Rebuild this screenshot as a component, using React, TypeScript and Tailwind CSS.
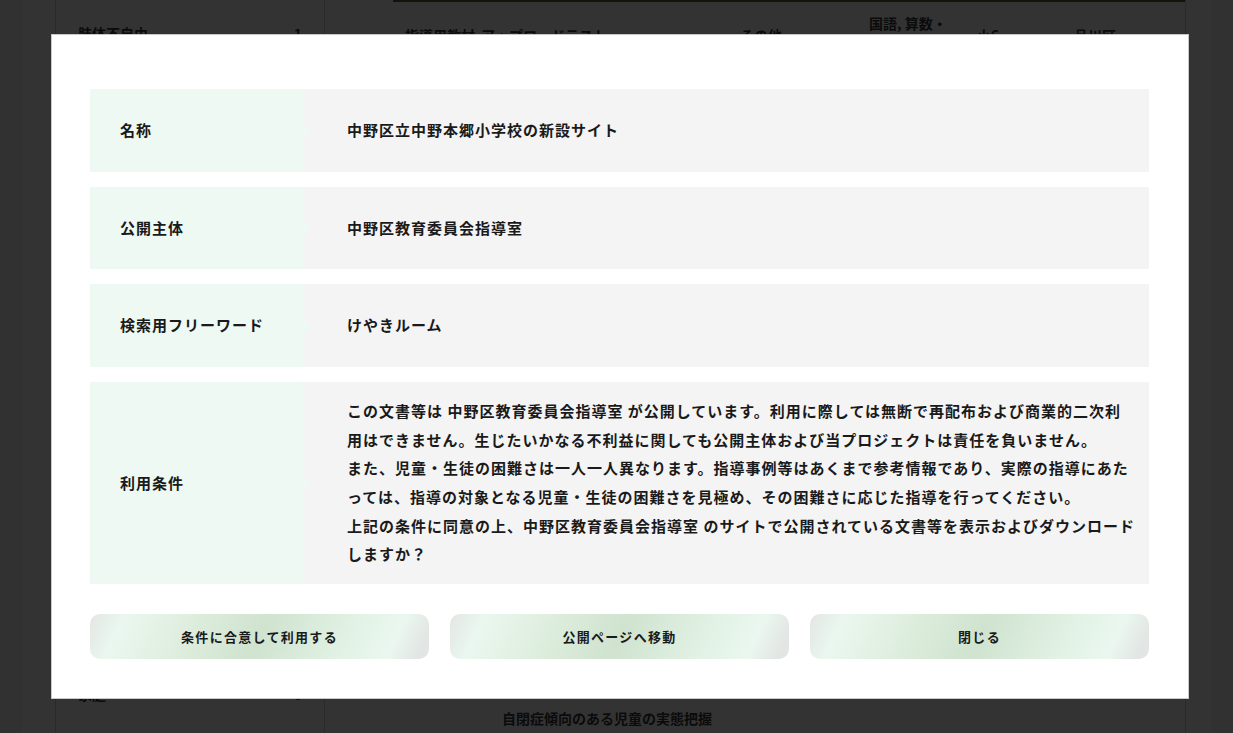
const jp = "font-['Noto_Sans_CJK_JP','Noto_Sans',sans-serif]";

const rows = [
  { label: '名称', value: ['中野区立中野本郷小学校の新設サイト'] },
  { label: '公開主体', value: ['中野区教育委員会指導室'] },
  { label: '検索用フリーワード', value: ['けやきルーム'] },
  {
    label: '利用条件',
    value: [
      'この文書等は 中野区教育委員会指導室 が公開しています。利用に際しては無断で再配布および商業的二次利',
      '用はできません。生じたいかなる不利益に関しても公開主体および当プロジェクトは責任を負いません。',
      'また、児童・生徒の困難さは一人一人異なります。指導事例等はあくまで参考情報であり、実際の指導にあた',
      'っては、指導の対象となる児童・生徒の困難さを見極め、その困難さに応じた指導を行ってください。',
      '上記の条件に同意の上、中野区教育委員会指導室 のサイトで公開されている文書等を表示およびダウンロード',
      'しますか？',
    ],
  },
];

const buttons = ['条件に合意して利用する', '公開ページへ移動', '閉じる'];

function BackgroundPage() {
  return (
    <div className={`h-[733px] overflow-hidden bg-[#f6f6f2] px-[22px] ${jp}`}>
      <div className="flex h-full bg-white pl-[33px] pr-[25px] text-[14px] font-bold text-[#3a3a3a]">
        <div className="flex w-[270px] flex-col justify-between border-x border-[#cfcfcf]">
          <div className="flex justify-between px-[22px] pt-[23px]">
            <span>肢体不自由</span>
            <span>1</span>
          </div>
          <div className="flex justify-between px-[22px] pb-[28px]">
            <span>家庭</span>
            <span>0</span>
          </div>
        </div>
        <div className="flex flex-1 flex-col justify-between border-r border-[#cfcfcf] pl-[68px]">
          <div className="border-t-2 border-[#6b5a3a]">
            <div className="flex items-start pt-[11px] pl-[12px]">
              <span className="pt-[12px]">指導用教材</span>
              <span className="pt-[12px] pl-[6px]">アップロードテスト</span>
              <span className="pt-[12px] pl-[133px]">その他</span>
              <span className="pl-[87px]">国語, 算数・</span>
              <span className="pt-[12px] pl-[30px]">小6</span>
              <span className="pt-[12px] pl-[75px]">品川区</span>
            </div>
          </div>
          <div className="pb-[4px] pl-[109px]">
            <span>自閉症傾向のある児童の実態把握</span>
          </div>
        </div>
      </div>
    </div>
  );
}

function Modal() {
  return (
    <div className={`w-[1138px] border border-[#c8c8c8] bg-white pt-[54px] pr-[39px] pb-[39px] pl-[38px] ${jp}`}>
      <div className="flex flex-col gap-[15px]">
        {rows.map((row) => (
          <div key={row.label} className="grid grid-cols-[213px_1fr]">
            <div className="relative flex items-center bg-[#eef9f4] pl-[30px] text-[15px] font-bold tracking-[1px] text-[#1a1a1a]">
              {row.label}
              <span className="absolute top-1/2 right-[-8px] -translate-y-1/2 border-y-[8px] border-l-[8px] border-y-transparent border-l-[#eef9f4]" />
            </div>
            <div className="bg-[#f4f4f4] py-[27px] pl-[44px] pr-[8px] text-[15px] font-bold leading-[28.7px] tracking-[1px] text-[#1a1a1a]">
              {row.value.length > 1 ? (
                <div className="-my-[12px] whitespace-nowrap">
                  {row.value.map((line) => (
                    <div key={line}>{line}</div>
                  ))}
                </div>
              ) : (
                row.value[0]
              )}
            </div>
          </div>
        ))}
      </div>
      <div className="mt-[30px] grid grid-cols-3 gap-[21px]">
        {buttons.map((b) => (
          <button
            key={b}
            className="h-[45px] rounded-[10px] bg-[linear-gradient(115deg,#e3e6e4_0%,#eaf7ef_10%,#dcecdb_32%,#cfe3cf_50%,#e2f2e5_75%,#eaf7ef_88%,#e2e5e3_97%)] text-[13px] font-bold tracking-[1.3px] text-[#1a1a1a]"
          >
            {b}
          </button>
        ))}
      </div>
    </div>
  );
}

export default function App() {
  return (
    <div className="relative h-[733px] w-[1233px] overflow-hidden">
      <BackgroundPage />
      <div className="absolute inset-0 flex items-center bg-black/80 pl-[51px]">
        <Modal />
      </div>
    </div>
  );
}
